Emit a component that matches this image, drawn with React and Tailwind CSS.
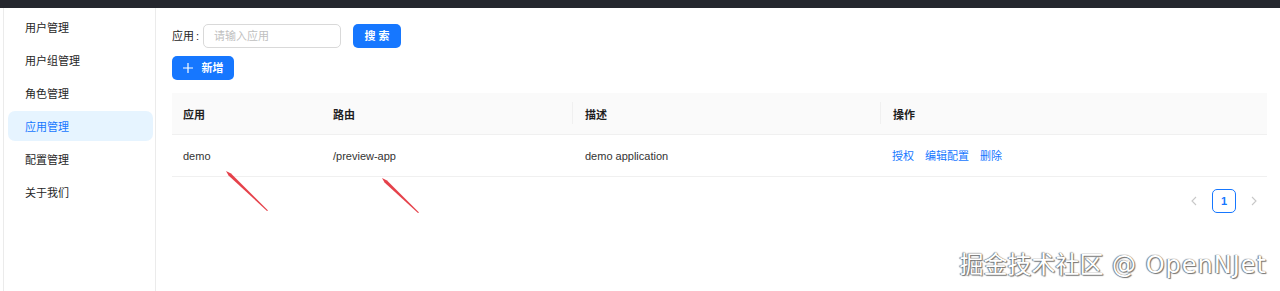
const menu = ['用户管理', '用户组管理', '角色管理', '应用管理', '配置管理', '关于我们'];

const font = { fontFamily: '"Liberation Sans", "Noto Sans CJK SC", sans-serif' };

function Sidebar() {
    return (
        <div className="ml-[3px] w-[153px] shrink-0 border-l border-r border-[#ebebeb] pt-[4px] pr-[2px] pl-[4px] flex flex-col gap-[3px]">
            {menu.map((m) =>
                m === '应用管理' ? (
                    <div key={m} className="h-[30px] flex items-center pl-[17px] pt-[2px] rounded-[7px] bg-[#e6f4ff] text-[#1677ff] text-[11px]">
                        {m}
                    </div>
                ) : (
                    <div key={m} className="h-[30px] flex items-center pl-[17px] pt-[2px] text-[#262626] text-[11px]">
                        {m}
                    </div>
                )
            )}
        </div>
    );
}

function Table() {
    return (
        <div className="mt-[13px] text-[11px]">
            {/* 表头 */}
            <div className="flex h-[42px] items-center pt-[3px] bg-[#fafafa] border-b border-[#f0f0f0] font-bold text-[#1f1f1f]">
                <div className="w-[150px] pl-[11px]">应用</div>
                <div className="w-[251px] pl-[11px] relative">
                    路由
                    <span className="absolute right-0 top-[-5px] h-[22px] w-px bg-[#f0f0f0]"></span>
                </div>
                <div className="w-[308px] pl-[12px] relative">
                    描述
                    <span className="absolute right-0 top-[-5px] h-[22px] w-px bg-[#f0f0f0]"></span>
                </div>
                <div className="flex-1 pl-[12px]">操作</div>
            </div>
            {/* 数据行 */}
            <div className="flex h-[42px] items-center pt-[2px] border-b border-[#f0f0f0] text-[#333]">
                <div className="w-[150px] pl-[11px]">demo</div>
                <div className="w-[251px] pl-[11px]">/preview-app</div>
                <div className="w-[308px] pl-[12px]">demo application</div>
                <div className="flex-1 pl-[11px] flex gap-[11px] text-[#1677ff]">
                    <span>授权</span>
                    <span>编辑配置</span>
                    <span>删除</span>
                </div>
            </div>
        </div>
    );
}

function Pagination() {
    return (
        <div className="mt-[12px] flex justify-end gap-[6px] pr-px">
            <div className="w-[24px] h-[24px] flex items-center justify-center text-[#c8c8c8]">
                <svg width="8" height="10" viewBox="0 0 8 10" fill="none" stroke="currentColor" strokeWidth="1.1"><path d="M6 1L2 5l4 4" /></svg>
            </div>
            <div className="w-[24px] h-[24px] flex items-center justify-center rounded-[5px] border border-[#1677ff] text-[#1677ff] text-[11px] font-semibold">
                1
            </div>
            <div className="w-[24px] h-[24px] flex items-center justify-center text-[#c8c8c8]">
                <svg width="8" height="10" viewBox="0 0 8 10" fill="none" stroke="currentColor" strokeWidth="1.1"><path d="M2 1l4 4-4 4" /></svg>
            </div>
        </div>
    );
}

export default function App() {
    return (
        <div className="relative w-[1280px] h-[291px] bg-white overflow-hidden" style={font}>
            <div className="h-[8px] bg-[#25272e]"></div>
            <div className="flex h-[283px]">
                <Sidebar />
                <div className="flex-1 pl-[16px] pr-[13px] pt-[16px]">
                    <div className="flex items-center h-[24px]">
                        <span className="text-[11px] text-[#262626] w-[31px] shrink-0 whitespace-nowrap pt-px">
                            应用<span className="ml-[2px]">:</span>
                        </span>
                        <div className="w-[138px] h-[24px] border border-[#d9d9d9] rounded-[5px] flex items-center pl-[10px] pt-px text-[11px] text-[#bfbfbf]">
                            请输入应用
                        </div>
                        <button className="ml-[12px] w-[48px] h-[24px] rounded-[5px] bg-[#1677ff] text-white text-[11px] font-semibold tracking-[3px] pl-[3px]">
                            搜索
                        </button>
                    </div>
                    <button className="mt-[8px] w-[62px] h-[24px] rounded-[5px] bg-[#1677ff] text-white text-[11px] font-semibold flex items-center justify-center gap-[9px]">
                        <svg width="10" height="10" viewBox="0 0 10 10" stroke="white" strokeWidth="1.2"><path d="M5 0v10M0 5h10" /></svg>
                        新增
                    </button>
                    <Table />
                    <Pagination />
                </div>
            </div>

            {/* 红色箭头标注 */}
            <svg className="absolute left-0 top-0 pointer-events-none" width="1280" height="291">
                <polygon points="226,171 231,173.5 268,210.5 267,211 228.5,175.5" fill="#e0202a" opacity="0.85" />
                <polygon points="382,178 387,180.5 419,212.5 418,213 384.5,182.5" fill="#e0202a" opacity="0.85" />
            </svg>

            {/* 水印 */}
            <div
                className="absolute right-[13px] bottom-[12px] text-[24px] leading-[28px] text-white whitespace-nowrap"
                style={{ fontFamily: '"DejaVu Sans", "Noto Sans CJK SC", sans-serif', textShadow: '0 0 1px #555, 1px 1px 1px #777, -1px 0 1px #888' }}
            >
                掘金技术社区<span className="tracking-[1px]"> @ OpenNJet</span>
            </div>
        </div>
    );
}
